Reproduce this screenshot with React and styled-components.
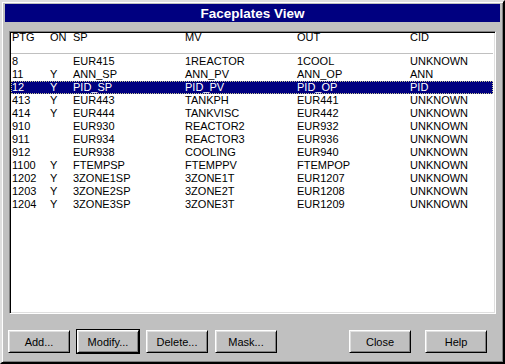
import React from 'react';
import styled, { createGlobalStyle } from 'styled-components';

const GlobalStyle = createGlobalStyle`
  html, body { margin: 0; padding: 0; background: #c0c0c0; }
  body { font-family: "Liberation Sans", Arial, sans-serif; font-size: 11px; color: #000; }
`;

const columns = ['PTG', 'ON', 'SP', 'MV', 'OUT', 'CID'];

const rows = [
  ['8', '', 'EUR415', '1REACTOR', '1COOL', 'UNKNOWN'],
  ['11', 'Y', 'ANN_SP', 'ANN_PV', 'ANN_OP', 'ANN'],
  ['12', 'Y', 'PID_SP', 'PID_PV', 'PID_OP', 'PID'],
  ['413', 'Y', 'EUR443', 'TANKPH', 'EUR441', 'UNKNOWN'],
  ['414', 'Y', 'EUR444', 'TANKVISC', 'EUR442', 'UNKNOWN'],
  ['910', '', 'EUR930', 'REACTOR2', 'EUR932', 'UNKNOWN'],
  ['911', '', 'EUR934', 'REACTOR3', 'EUR936', 'UNKNOWN'],
  ['912', '', 'EUR938', 'COOLING', 'EUR940', 'UNKNOWN'],
  ['1100', 'Y', 'FTEMPSP', 'FTEMPPV', 'FTEMPOP', 'UNKNOWN'],
  ['1202', 'Y', '3ZONE1SP', '3ZONE1T', 'EUR1207', 'UNKNOWN'],
  ['1203', 'Y', '3ZONE2SP', '3ZONE2T', 'EUR1208', 'UNKNOWN'],
  ['1204', 'Y', '3ZONE3SP', '3ZONE3T', 'EUR1209', 'UNKNOWN'],
];

const Window = styled.div`
  box-sizing: border-box;
  width: 505px;
  height: 364px;
  background: #c0c0c0;
  border: 2px solid;
  border-color: #dfdfdf #000 #000 #dfdfdf;
  box-shadow: inset 1px 1px 0 #fff, inset -1px -1px 0 #808080;
  padding: 2px 3px 9px 3px;
  display: flex;
  flex-direction: column;
`;

const TitleBar = styled.div`
  height: 18px;
  background: #000080;
  color: #fff;
  font-weight: bold;
  font-size: 13.5px;
  display: flex;
  align-items: center;
  justify-content: center;
`;

const ListBox = styled.div`
  box-sizing: border-box;
  margin: 9px 4px 0 4px;
  height: 283px;
  background: #fff;
  border: 1px solid;
  border-color: #808080 #fff #fff #808080;
  box-shadow: inset 1px 1px 0 #000, inset -1px -1px 0 #dfdfdf;
  padding: 1px 2px 0 1px;
`;

const Row = styled.div`
  display: grid;
  grid-template-columns: 38px 23px 112px 112px 113px 1fr;
  height: 13px;
  line-height: 13px;
  white-space: nowrap;
  background: ${p => (p.$selected ? '#000080' : 'transparent')};
  color: ${p => (p.$selected ? '#fff' : '#000')};
  outline: ${p => (p.$selected ? '1px dotted #c8c890' : 'none')};
  outline-offset: -1px;
`;

const HeaderRow = styled(Row)`
  height: 20px;
  line-height: 9px;
  border-bottom: 1px solid #c0c0c0;
  margin-bottom: 1px;
`;

const Cell = styled.span`
  padding-left: 1px;
`;

const ButtonBar = styled.div`
  display: flex;
  gap: 7px;
  margin-top: 16px;
  padding: 0 13px 0 3px;
`;

const Button = styled.button`
  box-sizing: border-box;
  width: 62px;
  height: 23px;
  padding: 0;
  font-family: "Liberation Sans", Arial, sans-serif;
  font-size: 11px;
  color: #000;
  background: #c0c0c0;
  border: 1px solid;
  border-color: #fff #000 #000 #fff;
  box-shadow: ${p =>
    p.$default
      ? '0 0 0 1px #000, inset 1px 1px 0 #dfdfdf, inset -1px -1px 0 #808080'
      : 'inset 1px 1px 0 #dfdfdf, inset -1px -1px 0 #808080'};
  margin-left: ${p => (p.$push ? 'auto' : '0')};
  margin-right: ${p => (p.$gap ? '7px' : '0')};
`;

export default function App() {
  return (
    <>
      <GlobalStyle />
      <Window>
        <TitleBar>Faceplates View</TitleBar>
        <ListBox>
          <HeaderRow>
            {columns.map(c => <Cell key={c}>{c}</Cell>)}
          </HeaderRow>
          {rows.map(r => (
            <Row key={r[0]} $selected={r[0] === '12'}>
              {r.map((v, i) => <Cell key={i}>{v}</Cell>)}
            </Row>
          ))}
        </ListBox>
        <ButtonBar>
          <Button>Add...</Button>
          <Button $default>Modify...</Button>
          <Button>Delete...</Button>
          <Button>Mask...</Button>
          <Button $push $gap>Close</Button>
          <Button>Help</Button>
        </ButtonBar>
      </Window>
    </>
  );
}
